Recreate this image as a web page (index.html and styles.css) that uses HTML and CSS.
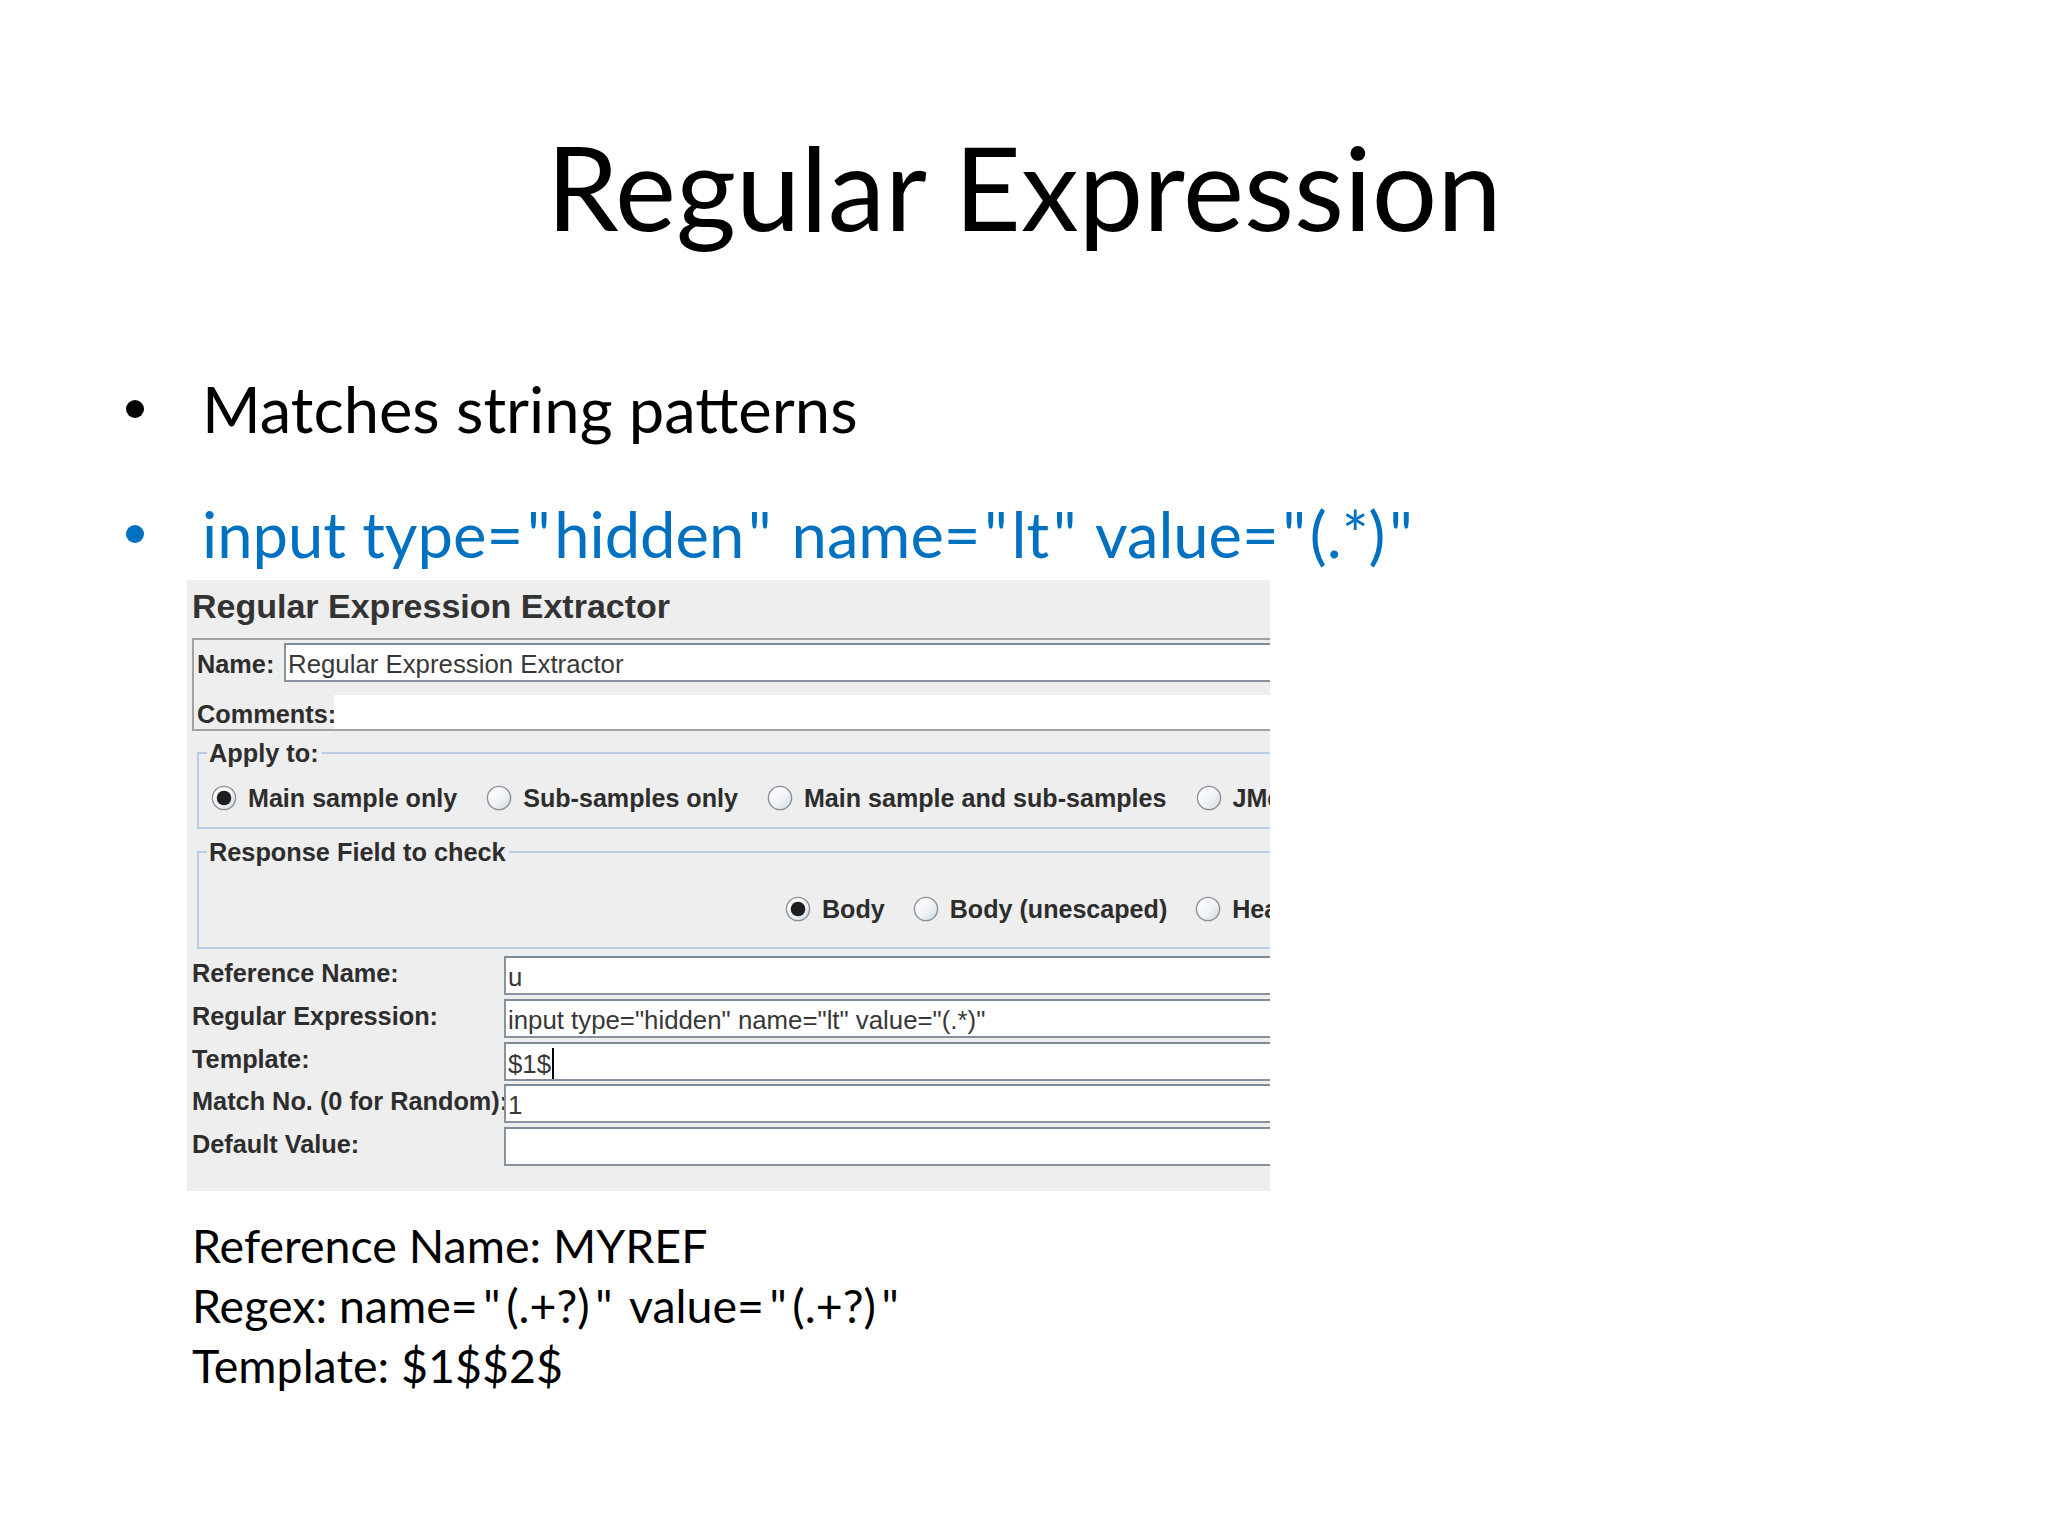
FILE: index.html
```html
<!DOCTYPE html>
<html lang="en">
<head>
<meta charset="utf-8">
<title>Regular Expression</title>
<link rel="stylesheet" href="styles.css">
</head>
<body>
<svg class="defs" aria-hidden="true">
  <defs>
    <linearGradient id="rg" x1="0" y1="0" x2="1" y2="1">
      <stop offset="0" stop-color="#ffffff"/>
      <stop offset="0.55" stop-color="#f1f4f7"/>
      <stop offset="1" stop-color="#cdd6e0"/>
    </linearGradient>
  </defs>
</svg>
<div class="slide">
  <h1 class="title">Regular Expression</h1>
  <ul class="bullets">
    <li><span class="dot"></span><span>Matches string patterns</span></li>
    <li class="blue"><span class="dot"></span><span>input type=<span class="q">"</span>hidden<span class="q">"</span> name=<span class="q">"</span>lt<span class="q">"</span> value=<span class="q">"</span>(.*)<span class="q">"</span></span></li>
  </ul>

  <div class="jm">
    <div class="jm-inner">
      <h2 class="jm-title">Regular Expression Extractor</h2>

      <div class="namebox">
        <div class="name-row">
          <span class="lbl name-lbl">Name:</span>
          <div class="field">Regular Expression Extractor</div>
        </div>
        <div class="comments-row">
          <span class="lbl comments-lbl">Comments:</span>
          <div class="comments-area"></div>
        </div>
      </div>

      <fieldset class="group apply">
        <legend>Apply to:</legend>
        <div class="radios">
          <span class="opt"><svg class="radio" viewBox="0 0 26 26"><circle cx="13" cy="13" r="11.6" fill="url(#rg)" stroke="#8b9199" stroke-width="1.4"/><circle cx="13" cy="13" r="7.3" fill="#1e1e1e"/></svg>Main sample only</span>
          <span class="opt"><svg class="radio" viewBox="0 0 26 26"><circle cx="13" cy="13" r="11.6" fill="url(#rg)" stroke="#8b9199" stroke-width="1.4"/></svg>Sub-samples only</span>
          <span class="opt"><svg class="radio" viewBox="0 0 26 26"><circle cx="13" cy="13" r="11.6" fill="url(#rg)" stroke="#8b9199" stroke-width="1.4"/></svg>Main sample and sub-samples</span>
          <span class="opt"><svg class="radio" viewBox="0 0 26 26"><circle cx="13" cy="13" r="11.6" fill="url(#rg)" stroke="#8b9199" stroke-width="1.4"/></svg>JMeter Variable</span>
        </div>
      </fieldset>

      <fieldset class="group response">
        <legend>Response Field to check</legend>
        <div class="radios radios-right">
          <span class="opt"><svg class="radio" viewBox="0 0 26 26"><circle cx="13" cy="13" r="11.6" fill="url(#rg)" stroke="#8b9199" stroke-width="1.4"/><circle cx="13" cy="13" r="7.3" fill="#1e1e1e"/></svg>Body</span>
          <span class="opt"><svg class="radio" viewBox="0 0 26 26"><circle cx="13" cy="13" r="11.6" fill="url(#rg)" stroke="#8b9199" stroke-width="1.4"/></svg>Body (unescaped)</span>
          <span class="opt"><svg class="radio" viewBox="0 0 26 26"><circle cx="13" cy="13" r="11.6" fill="url(#rg)" stroke="#8b9199" stroke-width="1.4"/></svg>Headers</span>
        </div>
      </fieldset>

      <div class="form-grid">
        <span class="lbl">Reference Name:</span>
        <div class="field">u</div>
        <span class="lbl">Regular Expression:</span>
        <div class="field">input type="hidden" name="lt" value="(.*)"</div>
        <span class="lbl">Template:</span>
        <div class="field">$1$<span class="caret"></span></div>
        <span class="lbl">Match No. (0 for Random):</span>
        <div class="field">1</div>
        <span class="lbl">Default Value:</span>
        <div class="field"></div>
      </div>
    </div>
  </div>

  <div class="notes">
    <div>Reference Name: MYREF</div>
    <div>Regex: name=<span class="q">"</span>(.+?)<span class="q">"</span> value=<span class="q">"</span>(.+?)<span class="q">"</span></div>
    <div>Template: $1$$2$</div>
  </div>
</div>
</body>
</html>
```

FILE: styles.css
```css
html, body {
  margin: 0;
  padding: 0;
  background: #ffffff;
}

.defs {
  width: 0;
  height: 0;
  display: block;
  overflow: hidden;
}

.slide {
  width: 2048px;
  height: 1536px;
  overflow: hidden;
  box-sizing: border-box;
  padding-top: 117px;
  font-family: Lato, "Open Sans", sans-serif;
  color: #000000;
  background: #ffffff;
}

.title {
  margin: 0;
  font-size: 115.5px;
  line-height: 140px;
  font-weight: 400;
  text-align: center;
}

.bullets {
  list-style: none;
  margin: 112px 0 0 0;
  padding: 0;
}

.bullets li {
  display: flex;
  font-size: 63.3px;
  line-height: 80px;
  height: 80px;
  white-space: nowrap;
}

.bullets li + li {
  margin-top: 45px;
}

.bullets .blue {
  color: #0070c0;
}

.q {
  padding: 0 0.06em;
}

.dot {
  flex: none;
  width: 18px;
  height: 18px;
  border-radius: 50%;
  background: currentColor;
  margin: 31px 58px 0 126px;
}

/* JMeter panel */
.jm {
  margin: 6px 0 0 187px;
  width: 1083px;
  height: 611px;
  box-sizing: border-box;
  background: #eeeeee;
  overflow: hidden;
  padding: 4px 0 0 5px;
  font-family: "Liberation Sans", Arial, sans-serif;
  color: #2e2e2e;
}

.jm-inner {
  width: 1500px;
}

.jm-title {
  margin: 0;
  font-size: 34px;
  line-height: 44px;
  font-weight: 700;
  color: #333333;
}

.lbl {
  font-size: 25.3px;
  font-weight: 700;
  white-space: nowrap;
  color: #2d2d2d;
}

.namebox {
  margin-top: 10px;
  border: 2px solid #a2a2a2;
  border-right: none;
  padding: 3px 0 0 3px;
}

.name-row {
  display: flex;
  align-items: baseline;
  height: 39px;
}

.name-lbl {
  width: 87px;
  flex: none;
}

.field {
  box-sizing: border-box;
  height: 39px;
  background: #ffffff;
  border-top: 2px solid #7d8a97;
  border-left: 2px solid #8893a0;
  border-bottom: 2px solid #86919d;
  padding: 4px 0 0 2px;
  font-size: 25.8px;
  line-height: 31px;
  font-weight: 400;
  color: #383838;
  white-space: nowrap;
}

.name-row .field {
  flex: 1;
}

.comments-row {
  display: flex;
  margin-top: 13px;
  height: 34px;
}

.comments-lbl {
  width: 137px;
  flex: none;
  line-height: 38px;
  height: 34px;
}

.comments-area {
  flex: 1;
  background: #ffffff;
}

.group {
  margin: 8px 0 0 5px;
  border: 2px solid #b8cde3;
  border-right: none;
  padding: 16px 0 14px 0;
  min-width: 0;
}

.group legend {
  margin-left: 8px;
  padding: 0 3px 0 2px;
  font-size: 25.3px;
  line-height: 28px;
  font-weight: 700;
  color: #2d2d2d;
}

.response {
  margin-top: 9px;
  padding: 28px 0 23px 0;
}

.radios {
  display: flex;
  align-items: center;
  gap: 29px;
  height: 30px;
  padding-left: 12px;
}

.radios-right {
  gap: 28px;
  padding-left: 586px;
}

.opt {
  display: flex;
  align-items: center;
  font-size: 25.1px;
  font-weight: 700;
  white-space: nowrap;
  color: #2d2d2d;
}

.radio {
  width: 26px;
  height: 26px;
  margin-right: 11px;
  flex: none;
}

.form-grid {
  display: grid;
  grid-template-columns: 312px 1fr;
  grid-auto-rows: 39px;
  row-gap: 3.75px;
  margin-top: 7px;
}

.form-grid .lbl {
  line-height: 35px;
}

.caret {
  display: inline-block;
  width: 2px;
  height: 31px;
  background: #000000;
  vertical-align: -6px;
  margin-left: 1px;
}

.notes {
  margin: 24px 0 0 192px;
  font-size: 46.5px;
  line-height: 60px;
}

.notes .q {
  padding: 0 0.12em;
}
```
